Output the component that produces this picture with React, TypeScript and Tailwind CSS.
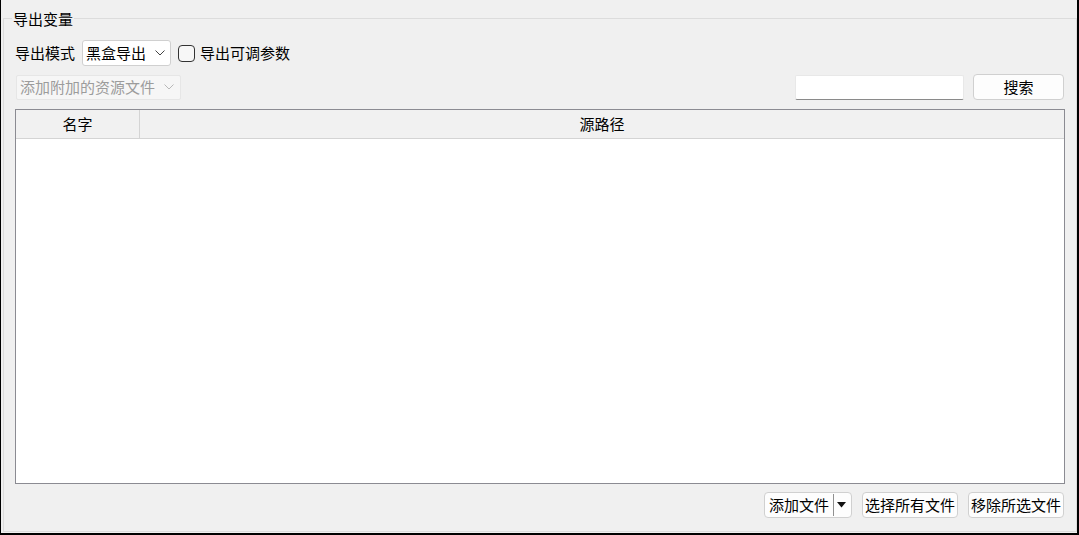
import React from "react";

const font = { fontFamily: '"Noto Sans CJK SC", "Microsoft YaHei", sans-serif' };

function Chevron({ color = "#555" }: { color?: string }) {
  return (
    <svg width="10" height="6" viewBox="0 0 10 6" className="flex-none">
      <path d="M0.5 0.5 L5 5 L9.5 0.5" fill="none" stroke={color} strokeWidth="1" />
    </svg>
  );
}

function PushButton({ children, className = "" }: { children: React.ReactNode; className?: string }) {
  return (
    <button
      className={
        "flex h-[26px] items-center justify-center rounded-[4px] border border-[#d0d0d0] bg-[#fdfdfd] text-[15px] leading-[20px] text-black " +
        className
      }
    >
      {children}
    </button>
  );
}

export default function App() {
  return (
    <div
      style={font}
      className="flex h-[535px] w-[1079px] flex-col border-r-2 border-b-2 border-l border-black bg-[#f0f0f0] text-[15px] leading-[20px] text-black"
    >
      <div className="relative mt-[18px] mb-[1px] ml-[2px] flex flex-1 flex-col border border-[#dcdcdc] pt-[21px] pr-[11px] pl-[11px]">
        <div className="absolute top-[-10px] left-[8px] bg-[#f0f0f0] px-[1px]">导出变量</div>

        {/* row 1 */}
        <div className="flex h-[26px] items-center">
          <span>导出模式</span>
          <div className="ml-[7px] flex h-[26px] w-[89px] items-center justify-between rounded-[3px] border border-[#d0d0d0] bg-white pr-[5px] pl-[3px]">
            <span>黑盒导出</span>
            <Chevron color="#444" />
          </div>
          <div className="ml-[7px] h-[17px] w-[17px] rounded-[4px] border border-[#333] bg-[#f7f7f7]" />
          <span className="ml-[5px]">导出可调参数</span>
        </div>

        {/* row 2 */}
        <div className="mt-[8px] flex h-[26px] items-center pr-[1px]">
          <div className="ml-[1px] flex h-[25px] w-[165px] items-center justify-between rounded-[2px] border border-[#e6e6e6] bg-[#f6f6f6] pr-[6px] pl-[3px] text-[#9c9c9c]">
            <span>添加附加的资源文件</span>
            <Chevron color="#b8b8b8" />
          </div>
          <div className="flex-1" />
          <div className="h-[25px] w-[169px] rounded-[2px] border border-b-[#8a8a8a] border-[#e8e8e8] bg-white" />
          <PushButton className="ml-[9px] w-[91px]">搜索</PushButton>
        </div>

        {/* table */}
        <div className="mt-[9px] flex h-[375px] flex-col border border-[#8b8b92] bg-white">
          <div className="flex h-[29px] border-b border-[#d4d4d4] bg-[#f1f1f1]">
            <div className="flex w-[124px] items-center justify-center border-r border-[#d4d4d4]">名字</div>
            <div className="flex flex-1 items-center justify-center">源路径</div>
          </div>
        </div>

        {/* bottom buttons */}
        <div className="mt-[8px] flex justify-end gap-[10px] pr-[1px]">
          <PushButton className="w-[88px] justify-start pl-[4px]">
            <span>添加文件</span>
            <span className="ml-[4px] h-[22px] w-px bg-[#909090]" />
            <svg width="9" height="6" viewBox="0 0 9 6" className="ml-[3px]">
              <path d="M0 0 H9 L4.5 5.5 Z" fill="#111" />
            </svg>
          </PushButton>
          <PushButton className="w-[96px]">选择所有文件</PushButton>
          <PushButton className="w-[96px]">移除所选文件</PushButton>
        </div>
      </div>
    </div>
  );
}
